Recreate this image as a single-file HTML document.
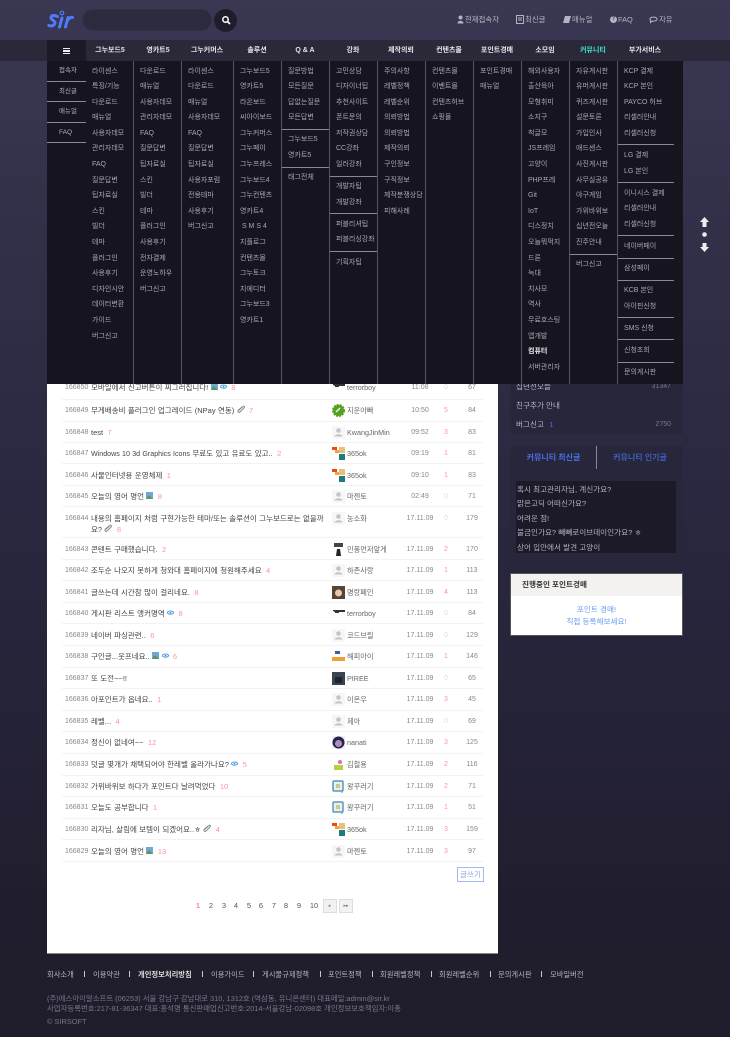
<!DOCTYPE html>
<html lang="ko"><head><meta charset="utf-8"><title>SIR</title>
<style>
*{box-sizing:border-box;margin:0;padding:0}
html,body{width:730px;height:1037px;overflow:hidden}
body{position:relative;background:linear-gradient(180deg,#3a3753 0,#33314a 200px,#2a2840 500px,#201e2e 900px,#1f1d2c 100%);font-family:"Liberation Sans","Noto Sans CJK KR",sans-serif;font-size:7.5px;color:#333}
#wrap{position:absolute;left:0;top:0;width:730px;height:1037px;filter:blur(.3px)}
.a{position:absolute;white-space:nowrap}
.tl{color:#b4b3c0;font-size:7.4px;top:14px;line-height:11px}
#nav{position:absolute;left:0;top:40px;width:730px;height:21px;background:#2a2839}
.n{position:absolute;top:0;line-height:21px;color:#e4e4ea;font-size:7px;font-weight:bold;text-align:center;width:48px}
#panel{position:absolute;left:47px;top:61px;width:636px;height:323px;background:#16141f;z-index:5}
.c{position:absolute;top:0;height:323px;border-left:1px solid #55535f;color:#a9a8b2;font-size:7px;line-height:15.6px;padding-top:2.5px;white-space:nowrap}
.c div{padding-left:6px}
.c i{display:block;font-style:normal;height:0;border-top:1px solid #8a8992;margin:3px 0 2.5px;padding:0}
.l{position:absolute;left:0;width:39px;border-bottom:1px solid #8a8992;color:#b4b3bc;text-align:left;padding-left:12px;height:20.5px;line-height:20px;font-size:6.5px}
#main{position:absolute;left:47px;top:384px;width:451px;height:570px;background:#fff;border-bottom:1px solid #888}
.r{position:absolute;left:62px;width:421px;height:12px;margin-top:1px;line-height:12px;font-size:7.5px;color:#444}
.r>*{position:absolute;top:0;white-space:nowrap}
.no{left:3px;color:#888;font-size:7px}
.t{left:29px;color:#444;word-spacing:.3px}
.t b{font-weight:normal;color:#ff8fb0;margin-left:2px}
.t em{font-style:normal;font-size:7.1px}
.av{left:270px;top:-1px!important;width:13px;height:13px}
.nk{left:285px;color:#666;font-size:7.2px}
.d{left:338px;width:40px;text-align:center;color:#888;font-size:7px}
.g{left:374px;width:20px;text-align:center;color:#ff8fb0;font-size:7px}
.g0{color:#ddd}
.h{left:400px;width:20px;text-align:center;color:#888;font-size:7px}
.ln{position:absolute;left:62px;width:421px;height:1px;background:#f3f3f3}
.pg{position:absolute;top:899px;color:#555;font-size:7.5px;line-height:13px;width:12px;text-align:center}
.pb{position:absolute;top:899px;width:14px;height:14px;background:#f2f2f2;border:1px solid #ddd;color:#777;font-size:5px;line-height:12px;text-align:center}
.f{position:absolute;top:969px;color:#b6b5c0;font-size:7.3px;line-height:11px;white-space:nowrap}
.fs{position:absolute;top:971px;width:1px;height:6px;background:#c8c8d0}
.side{position:absolute;left:510px;width:173px}
.sb{position:absolute;left:516px;width:150px;color:#b9b8c4;font-size:7.6px;line-height:11px;white-space:nowrap}
.li{left:517px;color:#b4b3bf;line-height:11px;font-size:7.6px}
.ft{left:47px;color:#77768a;line-height:11px;font-size:7.4px}
</style></head><body><div id="wrap">

<svg class="a" style="left:47px;top:10px" width="27" height="20" viewBox="0 0 27 20"><g fill="none" stroke="#4f7bfa" stroke-width="3" stroke-linecap="round" stroke-linejoin="round"><path d="M10.500 6.500C8 5 4.500 5 4 7.500C3.500 10 8.500 10.500 8 13C7.500 16 3.500 16.500 1.800 15.500"/><path d="M15 8L12.500 17"/><path d="M21 7.500L18.500 17"/><path d="M20.500 10.500C21.500 8.500 24 7 25.500 7.500"/></g><circle cx="15" cy="3" r="1.800" fill="none" stroke="#4f7bfa" stroke-width="1.200"/></svg>
<div class="a" style="left:82px;top:9px;width:130px;height:22px;border-radius:11px;background:#2c2a3d;border:1px solid #33314a"></div>
<div class="a" style="left:214px;top:9px;width:23px;height:23px;border-radius:50%;background:#1f1d2b"></div>
<svg class="a" style="left:221px;top:15px" width="10" height="10" viewBox="0 0 10 10"><circle cx="4.500" cy="4.500" r="2.700" fill="none" stroke="#fff" stroke-width="1.500"/><path d="M6.500 6.500L9 9" stroke="#fff" stroke-width="1.700"/></svg>

<svg class="a" style="left:457px;top:15px" width="7" height="9" viewBox="0 0 7 9"><circle cx="3.500" cy="2.500" r="2" fill="#b4b3c0"/><path d="M.5 8.500C.5 5 6.500 5 6.500 8.500Z" fill="#b4b3c0"/></svg>
<div class="a tl" style="left:465px">현재접속자</div>
<svg class="a" style="left:516px;top:15px" width="8" height="9" viewBox="0 0 8 9"><path d="M.5.5H7.500V8.500H.5Z M2 3H6 M2 5H6" fill="none" stroke="#b4b3c0"/></svg>
<div class="a tl" style="left:525px">최신글</div>
<svg class="a" style="left:563px;top:15px" width="8" height="9" viewBox="0 0 8 9"><path d="M2 1H8L6 8H0Z" fill="#b4b3c0"/></svg>
<div class="a tl" style="left:572px">매뉴얼</div>
<div class="a" style="left:610px;top:16px;width:7px;height:7px;border-radius:50%;background:#b4b3c0;color:#33314a;font-size:6px;line-height:7px;text-align:center;font-weight:bold">?</div>
<div class="a tl" style="left:618px">FAQ</div>
<svg class="a" style="left:649px;top:15px" width="9" height="9" viewBox="0 0 9 9"><path d="M1 4C1 1.500 8 1.500 8 4C8 6 4 6.500 3 6L1.500 7.500V5.500C1 5 1 4.500 1 4Z" fill="none" stroke="#b4b3c0"/></svg>
<div class="a tl" style="left:659px">자유</div>

<div id="nav">
<div class="a" style="left:47px;top:0;width:39px;height:21px;background:#1c1a27"></div>
<div class="a" style="left:63px;top:8px;width:7px;height:6px;border-top:1.500px solid #eee;border-bottom:1.500px solid #eee"></div>
<div class="a" style="left:63px;top:10px;width:7px;height:1.500px;background:#eee"></div>
<div class="n" style="left:86px">그누보드5</div>
<div class="n" style="left:134px">영카트5</div>
<div class="n" style="left:183px">그누커머스</div>
<div class="n" style="left:233px">솔루션</div>
<div class="n" style="left:281px">Q &amp; A</div>
<div class="n" style="left:329px">강좌</div>
<div class="n" style="left:377px">제작의뢰</div>
<div class="n" style="left:425px">컨텐츠몰</div>
<div class="n" style="left:473px">포인트경매</div>
<div class="n" style="left:521px">소모임</div>
<div class="n" style="left:569px;color:#3fe0d0">커뮤니티</div>
<div class="n" style="left:617px;width:56px">부가서비스</div>
</div>

<div id="panel">
<div class="l" style="top:0">접속자</div>
<div class="l" style="top:20.500px">최신글</div>
<div class="l" style="top:41px">매뉴얼</div>
<div class="l" style="top:61.500px">FAQ</div>
<div class="c" style="left:39px;width:48px;border-left:0;padding-left:0"><div>라이센스</div><div>특징/기능</div><div>다운로드</div><div>매뉴얼</div><div>사용자데모</div><div>관리자데모</div><div>FAQ</div><div>질문답변</div><div>팁자료실</div><div>스킨</div><div>빌더</div><div>테마</div><div>플러그인</div><div>사용후기</div><div>디자인시안</div><div>데이터변환</div><div>가이드</div><div>버그신고</div></div>
<div class="c" style="left:86px;width:48px"><div>다운로드</div><div>매뉴얼</div><div>사용자데모</div><div>관리자데모</div><div>FAQ</div><div>질문답변</div><div>팁자료실</div><div>스킨</div><div>빌더</div><div>테마</div><div>플러그인</div><div>사용후기</div><div>전자결제</div><div>운영노하우</div><div>버그신고</div></div>
<div class="c" style="left:134px;width:52px"><div>라이센스</div><div>다운로드</div><div>매뉴얼</div><div>사용자데모</div><div>FAQ</div><div>질문답변</div><div>팁자료실</div><div>사용자포럼</div><div>전용테마</div><div>사용후기</div><div>버그신고</div></div>
<div class="c" style="left:186px;width:48px"><div>그누보드5</div><div>영카트5</div><div>라온보드</div><div>씨아이보드</div><div>그누커머스</div><div>그누페이</div><div>그누프레스</div><div>그누보드4</div><div>그누컨텐츠</div><div>영카트4</div><div>&nbsp;S M S 4</div><div>지플로그</div><div>컨텐츠몰</div><div>그누토크</div><div>지에디터</div><div>그누보드3</div><div>영카트1</div></div>
<div class="c" style="left:234px;width:48px"><div>질문방법</div><div>모든질문</div><div>답없는질문</div><div>모든답변</div><i></i><div>그누보드5</div><div>영카트5</div><i></i><div>태그전체</div></div>
<div class="c" style="left:282px;width:48px"><div>고민상담</div><div>디자이너팁</div><div>추천사이트</div><div>폰트문의</div><div>저작권상담</div><div>CC강좌</div><div>일러강좌</div><i></i><div>개발자팁</div><div>개발강좌</div><i></i><div>퍼블리셔팁</div><div>퍼블리싱강좌</div><i></i><div>기획자팁</div></div>
<div class="c" style="left:330px;width:48px"><div>주의사항</div><div>레벨정책</div><div>레벨순위</div><div>의뢰방법</div><div>의뢰방법</div><div>제작의뢰</div><div>구인정보</div><div>구직정보</div><div>제작분쟁상담</div><div>피해사례</div></div>
<div class="c" style="left:378px;width:48px"><div>컨텐츠몰</div><div>이벤트몰</div><div>컨텐츠허브</div><div>쇼핑몰</div></div>
<div class="c" style="left:426px;width:48px"><div>포인트경매</div><div>매뉴얼</div></div>
<div class="c" style="left:474px;width:48px"><div>해외사용자</div><div>출산육아</div><div>모형취미</div><div>소지구</div><div>척글모</div><div>JS프레임</div><div>고양이</div><div>PHP프레</div><div>Git</div><div>IoT</div><div>디스정치</div><div>오늘뭐먹지</div><div>드론</div><div>늑대</div><div>치사모</div><div>역사</div><div>무료호스팅</div><div>앱개발</div><div style="color:#e8e8ee;font-weight:bold">컴퓨터</div><div>서버관리자</div></div>
<div class="c" style="left:522px;width:48px"><div>자유게시판</div><div>유머게시판</div><div>퀴즈게시판</div><div>설문토론</div><div>가입인사</div><div>애드센스</div><div>사진게시판</div><div>사무실공유</div><div>야구게임</div><div>가위바위보</div><div>십년전오늘</div><div>진주안내</div><i></i><div>버그신고</div></div>
<div class="c" style="left:570px;width:57px"><div>KCP 결제</div><div>KCP 본인</div><div>PAYCO 허브</div><div>리셀러안내</div><div>리셀러신청</div><i></i><div>LG 결제</div><div>LG 본인</div><i></i><div>이니시스 결제</div><div>리셀러안내</div><div>리셀러신청</div><i></i><div>네이버페이</div><i></i><div>삼성페이</div><i></i><div>KCB 본인</div><div>아이핀신청</div><i></i><div>SMS 신청</div><i></i><div>신청조회</div><i></i><div>문의게시판</div></div>
</div>

<svg class="a" style="left:698px;top:215px" width="13" height="40" viewBox="0 0 13 40"><path d="M6.500 2L11 7H8.500V12H4.500V7H2Z" fill="#eee"/><circle cx="6.500" cy="19.500" r="2.300" fill="#eee"/><path d="M6.500 37L11 32H8.500V28H4.500V32H2Z" fill="#eee"/></svg>

<div id="main"></div>
<svg width="0" height="0" style="position:absolute"><defs>
<symbol id="p" viewBox="0 0 13 13"><rect width="13" height="13" fill="#f7f7f7"/><circle cx="6.500" cy="4.500" r="2.300" fill="#c4c4c4"/><path d="M2.500 10.500C3 7.500 10 7.500 10.500 10.500Z" fill="#c4c4c4"/></symbol>
<symbol id="k" viewBox="0 0 13 13"><path d="M0 0H5V3H8V6H5V3H0Z" fill="#f04a10"/><rect x="7" width="6" height="6" fill="#e8c078"/><rect x="3" y="3" width="4" height="3" fill="#f8a040"/><rect x="7" y="7" width="6" height="6" fill="#1f7a80"/></symbol>
<symbol id="t" viewBox="0 0 13 13"><path d="M1 3H13V5H7V6H3V5L1 4Z" fill="#333"/></symbol>
<symbol id="w" viewBox="0 0 13 13"><rect x="1" y="1" width="10" height="10" rx="1" fill="#e8f0f0" stroke="#5a98b8" stroke-width="1.500"/><rect x="4" y="4" width="4" height="4" fill="#c8c890"/><path d="M10 11V13" stroke="#5a98b8"/></symbol>
<symbol id="im" viewBox="0 0 7 7"><rect width="7" height="7" fill="#6fa8d8"/><path d="M0 7L3 3L7 7Z" fill="#5a9a50"/></symbol>
<symbol id="wf" viewBox="0 0 8 6"><path d="M0 2.500C2 0 6 0 8 2.500C6 5 2 5 0 2.500Z" fill="none" stroke="#3c96e8" stroke-width="1"/><circle cx="4" cy="2.500" r="1" fill="#3c96e8"/></symbol>
<symbol id="cl" viewBox="0 0 8 8"><path d="M1 6L6 1.500C7 .5 8 2 7 3L3 7C2 8 0 7 1.500 5L5 2" fill="none" stroke="#888"/></symbol>
</defs></svg>

<div class="r" style="top:381px"><span class="no">166850</span><span class="t">모바일에서 신고버튼이 찌그러집니다! <svg width="7" height="7"><use href="#im"/></svg> <svg width="7" height="6"><use href="#wf"/></svg> <b>8</b></span><svg class="av"><use href="#t"/></svg><span class="nk">terrorboy</span><span class="d">11:08</span><span class="g g0">0</span><span class="h">67</span></div>
<div class="ln" style="top:399px"></div>
<div class="r" style="top:404px"><span class="no">166849</span><span class="t">무게배송비 플러그인 업그레이드 (NPay 연동) <svg width="8" height="8"><use href="#cl"/></svg> <b>7</b></span><svg class="av" viewBox="0 0 13 13"><circle cx="6.500" cy="6.500" r="5.500" fill="#5aa020" stroke="#5aa020" stroke-width="2" stroke-dasharray="2 1"/><path d="M4 8L8 4" stroke="#dfe" stroke-width="1.500"/></svg><span class="nk">지운아빠</span><span class="d">10:50</span><span class="g">5</span><span class="h">84</span></div>
<div class="ln" style="top:421px"></div>
<div class="r" style="top:426px"><span class="no">166848</span><span class="t">test <b>7</b></span><svg class="av"><use href="#p"/></svg><span class="nk">KwangJinMin</span><span class="d">09:52</span><span class="g">3</span><span class="h">83</span></div>
<div class="ln" style="top:442px"></div>
<div class="r" style="top:447px"><span class="no">166847</span><span class="t"><em>Windows 10 3d Graphics Icons</em> 무료도 있고 유료도 있고.. <b>2</b></span><svg class="av"><use href="#k"/></svg><span class="nk">365ok</span><span class="d">09:19</span><span class="g">1</span><span class="h">81</span></div>
<div class="ln" style="top:463px"></div>
<div class="r" style="top:469px"><span class="no">166846</span><span class="t">사물인터넷용 운영체제 <b>1</b></span><svg class="av"><use href="#k"/></svg><span class="nk">365ok</span><span class="d">09:10</span><span class="g">1</span><span class="h">83</span></div>
<div class="ln" style="top:485px"></div>
<div class="r" style="top:490px"><span class="no">166845</span><span class="t">오늘의 영어 명언 <svg width="7" height="7"><use href="#im"/></svg> <b>8</b></span><svg class="av"><use href="#p"/></svg><span class="nk">마젠토</span><span class="d">02:49</span><span class="g g0">0</span><span class="h">71</span></div>
<div class="ln" style="top:506px"></div>
<div class="r" style="top:512px"><span class="no">166844</span><span class="t" style="line-height:10px;top:1px">내용의 홈페이지 처럼 구현가능한 테마/또는 솔루션이 그누보드로는 없을까<br>요? <svg width="8" height="8"><use href="#cl"/></svg> <b>8</b></span><svg class="av"><use href="#p"/></svg><span class="nk">농소화</span><span class="d">17.11.09</span><span class="g g0">0</span><span class="h">179</span></div>
<div class="ln" style="top:537px"></div>
<div class="r" style="top:543px"><span class="no">166843</span><span class="t">콘텐트 구매했습니다. <b>2</b></span><svg class="av" viewBox="0 0 13 13"><rect width="13" height="13" fill="#fff"/><path d="M4 13L5 6H8L9 13Z" fill="#222"/><rect x="2" y="0" width="9" height="4" fill="#444"/></svg><span class="nk">민풍먼저앞게</span><span class="d">17.11.09</span><span class="g">2</span><span class="h">170</span></div>
<div class="ln" style="top:559px"></div>
<div class="r" style="top:564px"><span class="no">166842</span><span class="t">조두순 나오지 못하게 청와대 홈페이지에 청원해주세요 <b>4</b></span><svg class="av"><use href="#p"/></svg><span class="nk">하존사랑</span><span class="d">17.11.09</span><span class="g">1</span><span class="h">113</span></div>
<div class="ln" style="top:580px"></div>
<div class="r" style="top:586px"><span class="no">166841</span><span class="t">글쓰는데 시간참 많이 걸리네요. <b>8</b></span><svg class="av" viewBox="0 0 13 13"><rect width="13" height="13" fill="#554433"/><circle cx="6.500" cy="7" r="3.500" fill="#e8c8b0"/></svg><span class="nk">명랑폐인</span><span class="d">17.11.09</span><span class="g">4</span><span class="h">113</span></div>
<div class="ln" style="top:602px"></div>
<div class="r" style="top:607px"><span class="no">166840</span><span class="t">게시판 리스트 앵커명역 <svg width="7" height="6"><use href="#wf"/></svg> <b>8</b></span><svg class="av"><use href="#t"/></svg><span class="nk">terrorboy</span><span class="d">17.11.09</span><span class="g g0">0</span><span class="h">84</span></div>
<div class="ln" style="top:623px"></div>
<div class="r" style="top:629px"><span class="no">166839</span><span class="t">네이버 파싱관련.. <b>6</b></span><svg class="av"><use href="#p"/></svg><span class="nk">코드브릴</span><span class="d">17.11.09</span><span class="g g0">0</span><span class="h">129</span></div>
<div class="ln" style="top:645px"></div>
<div class="r" style="top:650px"><span class="no">166838</span><span class="t">구인글...웃프네요.. <svg width="7" height="7"><use href="#im"/></svg> <svg width="7" height="6"><use href="#wf"/></svg> <b>6</b></span><svg class="av" viewBox="0 0 13 13"><rect width="13" height="13" fill="#fff"/><rect x="3" y="1" width="5" height="3" fill="#3060b0"/><rect x="0" y="7" width="13" height="4" fill="#f0a030"/></svg><span class="nk">해피아이</span><span class="d">17.11.09</span><span class="g">1</span><span class="h">146</span></div>
<div class="ln" style="top:667px"></div>
<div class="r" style="top:672px"><span class="no">166837</span><span class="t">또 도전~~!!</span><svg class="av" viewBox="0 0 13 13"><rect width="13" height="13" fill="#3a4450"/><rect x="3" y="5" width="7" height="6" fill="#1c2430"/></svg><span class="nk">PIREE</span><span class="d">17.11.09</span><span class="g g0">0</span><span class="h">65</span></div>
<div class="ln" style="top:688px"></div>
<div class="r" style="top:693px"><span class="no">166836</span><span class="t">아포인트가 옵네요.. <b>1</b></span><svg class="av"><use href="#p"/></svg><span class="nk">이온우</span><span class="d">17.11.09</span><span class="g">3</span><span class="h">45</span></div>
<div class="ln" style="top:710px"></div>
<div class="r" style="top:715px"><span class="no">166835</span><span class="t">레벨... <b>4</b></span><svg class="av"><use href="#p"/></svg><span class="nk">제아</span><span class="d">17.11.09</span><span class="g g0">0</span><span class="h">69</span></div>
<div class="ln" style="top:731px"></div>
<div class="r" style="top:736px"><span class="no">166834</span><span class="t">정신이 없네여~~ <b>12</b></span><svg class="av" viewBox="0 0 13 13"><rect width="13" height="13" fill="#f0eef4"/><circle cx="6.500" cy="6.500" r="6" fill="#2c2048"/><circle cx="6.500" cy="7.500" r="3.500" fill="#a890c0"/></svg><span class="nk">nanati</span><span class="d">17.11.09</span><span class="g">3</span><span class="h">125</span></div>
<div class="ln" style="top:753px"></div>
<div class="r" style="top:758px"><span class="no">166833</span><span class="t">덧글 몇개가 채택되어야 한레벨 올라가나요? <svg width="7" height="6"><use href="#wf"/></svg> <b>5</b></span><svg class="av" viewBox="0 0 13 13"><rect width="13" height="13" fill="#fff"/><rect x="2" y="7" width="9" height="5" fill="#b8d040"/><circle cx="8" cy="4" r="2" fill="#e868a8"/></svg><span class="nk">김철용</span><span class="d">17.11.09</span><span class="g">2</span><span class="h">116</span></div>
<div class="ln" style="top:775px"></div>
<div class="r" style="top:780px"><span class="no">166832</span><span class="t">가위바위보 하다가 포인트다 날려먹었다 <b>10</b></span><svg class="av"><use href="#w"/></svg><span class="nk">왕꾸러기</span><span class="d">17.11.09</span><span class="g">2</span><span class="h">71</span></div>
<div class="ln" style="top:796px"></div>
<div class="r" style="top:801px"><span class="no">166831</span><span class="t">오늘도 공부합니다 <b>1</b></span><svg class="av"><use href="#w"/></svg><span class="nk">왕꾸러기</span><span class="d">17.11.09</span><span class="g">1</span><span class="h">51</span></div>
<div class="ln" style="top:818px"></div>
<div class="r" style="top:823px"><span class="no">166830</span><span class="t">리자님, 살림에 보템이 되겠어요..ㅎ <svg width="8" height="8"><use href="#cl"/></svg> <b>4</b></span><svg class="av"><use href="#k"/></svg><span class="nk">365ok</span><span class="d">17.11.09</span><span class="g">3</span><span class="h">159</span></div>
<div class="ln" style="top:839px"></div>
<div class="r" style="top:845px"><span class="no">166829</span><span class="t">오늘의 영어 명언 <svg width="7" height="7"><use href="#im"/></svg> <b>13</b></span><svg class="av"><use href="#p"/></svg><span class="nk">마젠토</span><span class="d">17.11.09</span><span class="g">3</span><span class="h">97</span></div>
<div class="ln" style="top:861px"></div>

<div class="a" style="left:457px;top:867px;width:27px;height:15px;border:1px solid #a4b8f0;color:#8aa4e8;font-size:7.5px;line-height:13px;text-align:center;background:#fff">글쓰기</div>

<div class="pg" style="left:192px;color:#ff7fa8;font-weight:bold">1</div>
<div class="pg" style="left:205px">2</div>
<div class="pg" style="left:218px">3</div>
<div class="pg" style="left:230px">4</div>
<div class="pg" style="left:243px">5</div>
<div class="pg" style="left:255px">6</div>
<div class="pg" style="left:268px">7</div>
<div class="pg" style="left:280px">8</div>
<div class="pg" style="left:293px">9</div>
<div class="pg" style="left:308px">10</div>
<div class="pb" style="left:323px">▸</div>
<div class="pb" style="left:339px">▸▸</div>

<div class="side" style="top:384px;height:50px;background:#28263a"></div>
<div class="sb" style="top:381px">십년전오늘</div><div class="a" style="left:640px;top:381px;width:31px;text-align:right;color:#77768a;line-height:11px;font-size:7px">31347</div>
<div class="sb" style="top:400px">친구추가 안내</div>
<div class="sb" style="top:419px">버그신고 <span style="color:#4d6fe0;margin-left:3px">1</span></div><div class="a" style="left:640px;top:419px;width:31px;text-align:right;color:#77768a;line-height:11px;font-size:7px">2750</div>

<div class="side" style="top:446px;height:115px;background:#28263a"></div>
<div class="a" style="left:510px;top:446px;width:87px;height:23px;text-align:center;line-height:23px;color:#4a6ee8;font-weight:bold;font-size:8px">커뮤니티 최신글</div>
<div class="a" style="left:596px;top:446px;width:1px;height:23px;background:#8a8992"></div>
<div class="a" style="left:597px;top:446px;width:86px;height:23px;text-align:center;line-height:23px;color:#3d5fc0;font-weight:bold;font-size:8px">커뮤니티 인기글</div>
<div class="a" style="left:516px;top:481px;width:160px;height:72px;background:#1c1a28"></div>
<div class="a li" style="top:484px">혹시 최고관리자님, 계신가요?</div>
<div class="a li" style="top:498px">맑은고딕 어떠신가요?</div>
<div class="a li" style="top:513px">어려운 점!</div>
<div class="a li" style="top:527px">불금인가요? 빼빼로이브데이인가요? ㅎ</div>
<div class="a li" style="top:542px">상어 입안에서 발견 고양이</div>

<div class="a" style="left:510px;top:573px;width:173px;height:63px;background:#fff;border:1px solid #555"></div>
<div class="a" style="left:511px;top:574px;width:171px;height:22px;background:#f3f2f1;color:#333;font-weight:bold;font-size:7.6px;line-height:22px;padding-left:11px">진행중인 포인트경매</div>
<div class="a" style="left:511px;top:604px;width:171px;text-align:center;color:#6a9cf0;line-height:11.500px;font-size:7.6px">포인트 경매!<br>직접 등록해보세요!</div>

<div class="f" style="left:47px">회사소개</div><div class="fs" style="left:84px"></div>
<div class="f" style="left:93px">이용약관</div><div class="fs" style="left:129px"></div>
<div class="f" style="left:138px;color:#ddd;font-weight:bold">개인정보처리방침</div><div class="fs" style="left:202px"></div>
<div class="f" style="left:211px">이용가이드</div><div class="fs" style="left:253px"></div>
<div class="f" style="left:262px">게시물규제정책</div><div class="fs" style="left:320px"></div>
<div class="f" style="left:328px">포인트정책</div><div class="fs" style="left:372px"></div>
<div class="f" style="left:380px">회원레벨정책</div><div class="fs" style="left:431px"></div>
<div class="f" style="left:439px">회원레벨순위</div><div class="fs" style="left:490px"></div>
<div class="f" style="left:498px">문의게시판</div><div class="fs" style="left:541px"></div>
<div class="f" style="left:550px">모바일버전</div>

<div class="a ft" style="top:993px">(주)에스아이알소프트 (06253) 서울 강남구 강남대로 310, 1312호 (역삼동, 유니온센터) 대표메일:admin@sir.kr</div>
<div class="a ft" style="top:1003px">사업자등록번호:217-81-36347 대표:홍석명 통신판매업신고번호:2014-서울강남-02098호 개인정보보호책임자:이총</div>
<div class="a ft" style="top:1016px">© SIRSOFT</div>
</div></body></html>
